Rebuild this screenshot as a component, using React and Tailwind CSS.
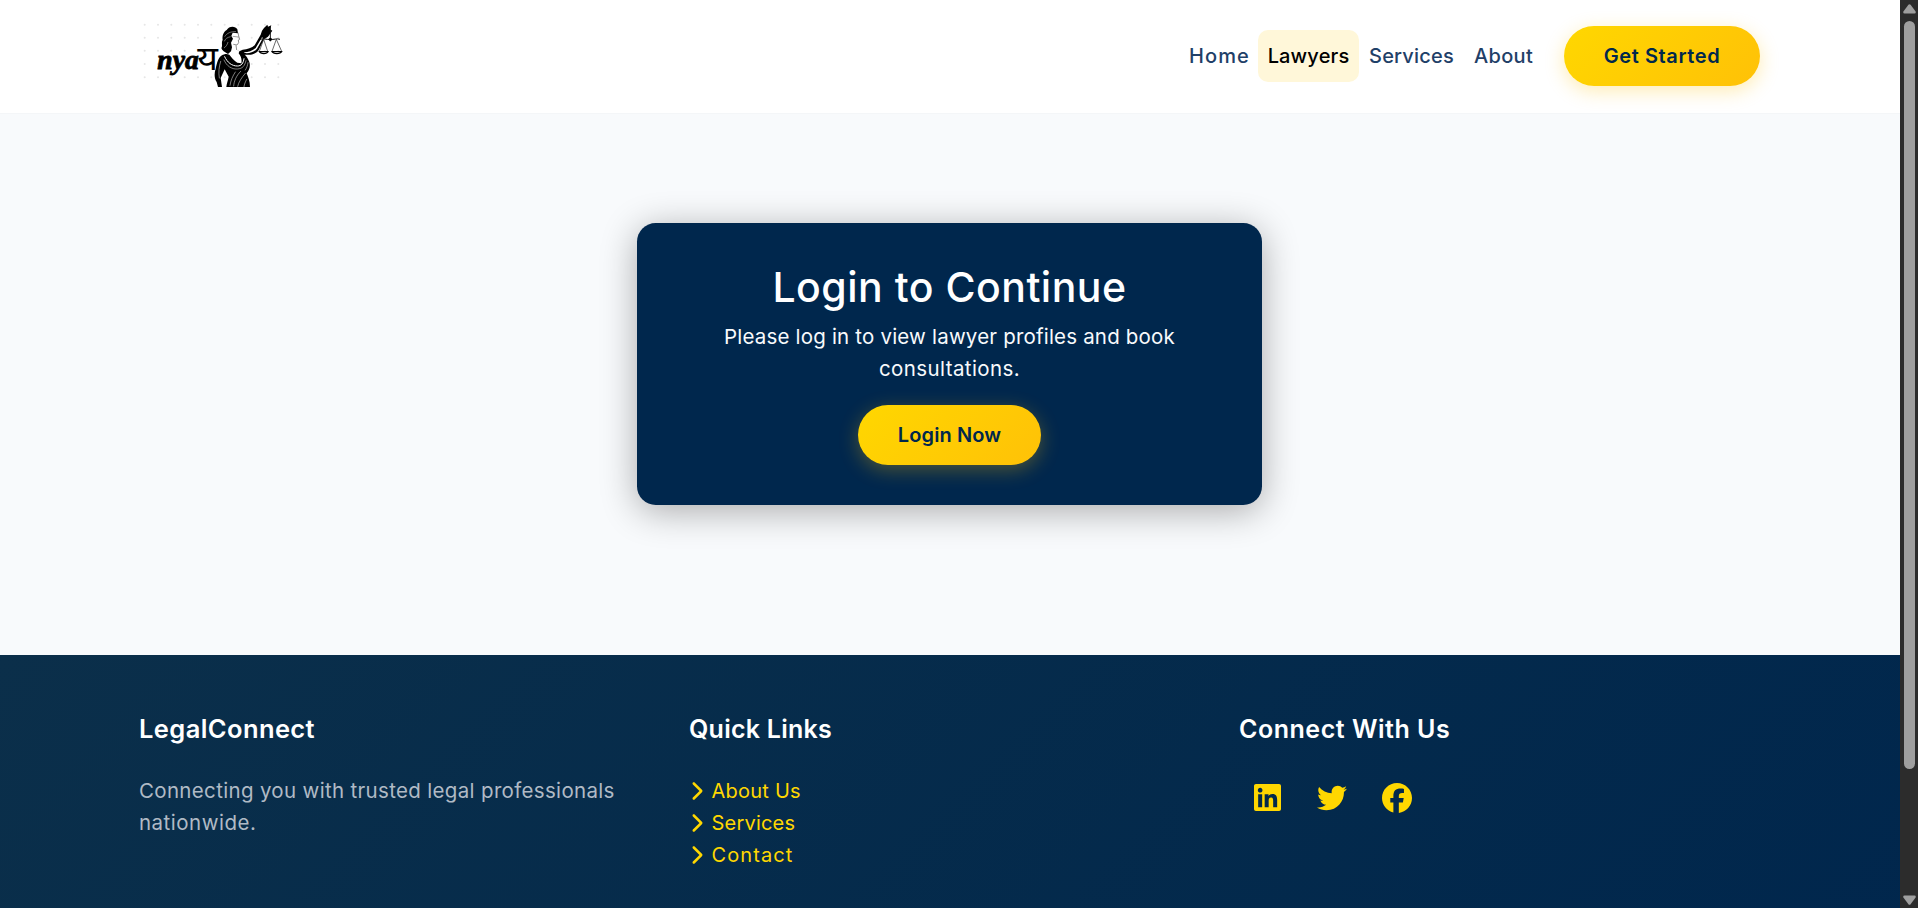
import { FaChevronRight, FaFacebook, FaLinkedin, FaTwitter } from "react-icons/fa6";

const NAV = [
  { label: "Home", box: "w-[79px] pl-0.5 text-[#1f4068] tracking-[1.1px]" },
  { label: "Lawyers", box: "w-[101px] bg-[#fff7d9] text-black tracking-[0.15px]" },
  { label: "Services", box: "w-[104px] pl-px text-[#1f4068] tracking-[0.2px]" },
  { label: "About", box: "w-[81px] text-[#1f4068] tracking-[0.35px]" },
];

const LINKS = [
  { label: "About Us", tracking: "tracking-[0.23px]" },
  { label: "Services", tracking: "tracking-[0.21px]" },
  { label: "Contact", tracking: "tracking-[1.1px]" },
];

const DOT_COLS = [44, 84, 124, 164, 204, 244, 284, 325, 365, 405, 445];
const DOT_ROWS = [44, 83, 122, 162, 202];

function Logo() {
  return (
    <svg width="150" height="67" viewBox="30 30 450 201" className="block" aria-hidden="true">
      <g fill="#e6e6e6">
        {DOT_ROWS.map((y) => DOT_COLS.map((x) => <circle key={`${x}-${y}`} cx={x} cy={y} r="3" />))}
      </g>
      <text x="82" y="178" fontFamily="Liberation Serif, serif" fontStyle="italic" fontWeight="700" fontSize="80" textLength="124" lengthAdjust="spacingAndGlyphs" stroke="#000" strokeWidth="2.5">
        nya
      </text>
      <text x="202" y="180" fontFamily="Noto Sans, Noto Sans Devanagari, sans-serif" fontSize="102" textLength="62" lengthAdjust="spacingAndGlyphs">
        य
      </text>
      {/* arms, torso and gown */}
      <path fill="#fff" d="M300 104L324 104L318 122L338 126L350 170L300 160L280 136Z" />
      <path d="M276 136C264 142 261 160 257 176C252 190 253 208 260 216L264 231H276L272 204L284 178L296 200C294 212 290 220 289 231H360C360 214 354 200 350 190C358 180 362 168 358 156C354 146 350 138 344 134L352 134C366 136 380 130 386 120L402 88L414 80L427 62L420 58L424 46L414 50L412 44L402 54L396 62L392 74L374 106C366 114 352 118 338 119L328 124L326 130C334 140 336 150 334 160L322 158C312 152 304 142 298 134C290 130 282 132 276 136Z" />
      <path fill="#fff" d="M342 127C354 127 368 122 377 114L396 82L399 84L381 116C372 127 356 131 344 129Z" />
      <path fill="none" stroke="#fff" strokeWidth="3" strokeLinecap="round" d="M284 140C292 158 306 168 322 168C334 168 340 160 342 146" />
      <path fill="none" stroke="#ddd" strokeWidth="1.7" strokeLinecap="round" d="M282 150C290 168 304 178 322 177C338 176 344 168 348 152M272 154C267 170 265 186 268 204M316 186C308 198 302 212 300 226M332 184C318 198 312 214 311 228M346 190C334 204 326 216 323 229M350 208C346 216 343 222 342 230M354 158C353 166 350 174 346 180" />
      {/* head, hair and blindfold */}
      <path d="M290 60C296 48 316 46 322 58L324 70L308 68L304 78L309 86L303 98L306 112L303 124L294 132C284 126 276 122 274 114C279 108 273 98 278 90C276 78 280 66 290 60Z" />
      <path fill="none" stroke="#ccc" strokeWidth="1.6" d="M284 80C290 70 302 64 318 65M283 94C286 86 292 82 302 80M282 114C288 110 292 104 294 96" />
      <path fill="none" stroke="#444" strokeWidth="1.8" d="M324 68L326 78L329 88L325 90L326 98L321 105L310 103M318 106L320 120" />
      <path stroke="#777" strokeWidth="2" d="M308 79L326 81" />
      {/* balance */}
      <path fill="none" stroke="#111" strokeWidth="3" d="M421 48V94M390 88C400 84 410 90 421 88C432 90 440 84 450 88" />
      <circle cx="421" cy="88" r="5" />
      <path fill="none" stroke="#333" strokeWidth="2.2" d="M401 88L388 124M401 88L413 124M439 88L426 124M439 88L455 124" />
      <path d="M385 123H417C413 136 390 136 385 123ZM423 123H458C453 136 428 136 423 123Z" />
      <path fill="#fff" d="M392 126H411C408 129 396 129 392 126ZM430 126H451C447 129 434 129 430 126Z" />
    </svg>
  );
}

function PillButton({ children, className }) {
  return (
    <button
      className={`h-[60px] rounded-full bg-linear-135 from-[#ffd700] to-[#ffc107] text-center text-xl leading-8 font-semibold whitespace-nowrap text-[#00274d] shadow-[0_5px_19px_rgba(255,193,7,0.3)] ${className}`}
    >
      {children}
    </button>
  );
}

function Header() {
  return (
    <header className="flex h-[113px] shrink-0 items-center justify-between bg-white px-[140px] pb-px shadow-[0_1px_1px_rgba(0,0,0,0.015)]">
      <div className="-mt-1.5">
        <Logo />
      </div>
      <div className="flex items-center gap-5">
        <nav className="flex items-center">
          {NAV.map((item) => (
            <a
              key={item.label}
              className={`flex h-[52px] items-center justify-center rounded-[10px] text-xl leading-8 font-medium ${item.box}`}
            >
              {item.label}
            </a>
          ))}
        </nav>
        <PillButton className="w-[196px] tracking-[0.6px]">Get Started</PillButton>
      </div>
    </header>
  );
}

function LoginCard() {
  return (
    <section className="flex h-[282px] w-[625px] flex-col items-center rounded-[18.75px] bg-[#00274d] p-10 text-center text-white shadow-[0_6px_36px_rgba(0,0,0,0.32)]">
      <h2 className="text-[41px] leading-[48px] font-medium tracking-[0.5px]">Login to Continue</h2>
      <p className="mt-2.5 text-[20.5px] leading-8 tracking-[0.19px] text-[#f8fafc]">
        Please log in to view lawyer profiles and book
        <br />
        <span className="tracking-[0.4px]">consultations.</span>
      </p>
      <PillButton className="mt-5 w-[183px] tracking-[0.12px]">Login Now</PillButton>
    </section>
  );
}

function Footer() {
  return (
    <footer className="h-[399px] shrink-0 bg-linear-135 from-[#0b2f4a] to-[#00264d] pt-[59px] pl-[139px]">
      <div className="grid w-[1650px] grid-cols-3">
        <div>
          <h5 className="text-[25.5px] leading-[30px] font-semibold tracking-[0.4px] text-white">LegalConnect</h5>
          <p className="mt-[31px] text-[20.5px] leading-8 tracking-[0.33px] text-[#b0bac5]">
            Connecting you with trusted legal professionals
            <br />
            <span className="tracking-[0.5px]">nationwide.</span>
          </p>
        </div>
        <div>
          <h5 className="text-[25px] leading-[30px] font-semibold tracking-[0.25px] text-white">Quick Links</h5>
          <ul className="mt-[31px] text-xl leading-8 text-[#ffd700]">
            {LINKS.map((link) => (
              <li key={link.label} className="flex items-center gap-[9px] pl-px">
                <FaChevronRight className="h-5 w-[12.5px]" />
                <a className={link.tracking}>{link.label}</a>
              </li>
            ))}
          </ul>
        </div>
        <div>
          <h5 className="text-[25px] leading-[30px] font-semibold tracking-[0.53px] text-white">Connect With Us</h5>
          <div className="mt-[38px] flex items-center gap-[35.5px] pl-[15px] text-[#ffd700]">
            <FaLinkedin className="h-[31px] w-[27px]" />
            <FaTwitter className="size-[30px]" />
            <FaFacebook className="size-[30px]" />
          </div>
        </div>
      </div>
    </footer>
  );
}

function Scrollbar() {
  return (
    <div className="flex h-full w-[18px] shrink-0 flex-col items-center bg-[#2c2c2c] pt-1 pb-[3px] text-[#9f9f9f]">
      <svg width="13" height="10" viewBox="0 0 13 10" fill="currentColor">
        <path d="M5.4 .8Q6.5-.5 7.6 .8L12.6 7.6Q13.2 9.5 11.5 9.5H1.5Q-.2 9.5 .4 7.6Z" />
      </svg>
      <div className="mt-[7px] h-[748px] w-[11px] rounded-full bg-[#9f9f9f]" />
      <svg width="13" height="10" viewBox="0 0 13 10" fill="currentColor" className="mt-auto">
        <path d="M5.4 9.2Q6.5 10.5 7.6 9.2L12.6 2.4Q13.2 .5 11.5 .5H1.5Q-.2 .5 .4 2.4Z" />
      </svg>
    </div>
  );
}

export default function App() {
  return (
    <div className="flex h-[908px] w-[1918px] overflow-hidden font-[Inter,sans-serif]">
      <div className="flex h-full w-[1900px] flex-col overflow-hidden bg-[#f8fafc]">
        <Header />
        <main className="flex h-[542px] shrink-0 justify-center pt-[110px] pr-px">
          <LoginCard />
        </main>
        <Footer />
      </div>
      <Scrollbar />
    </div>
  );
}
